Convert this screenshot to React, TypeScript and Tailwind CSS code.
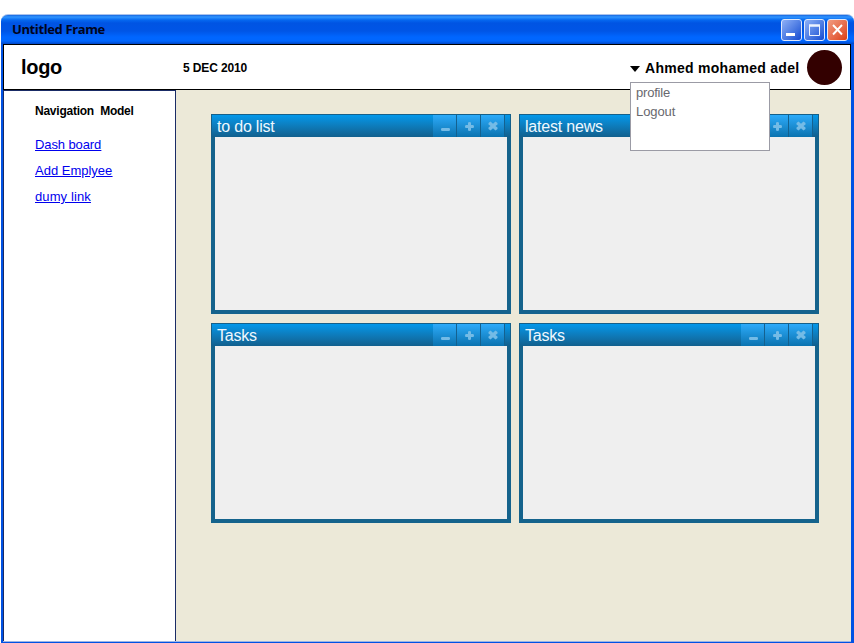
import React from "react";

const glyphs = {
  minimize: <rect x="8" y="13" width="9" height="3" rx="1.2" />,
  add: <path d="M11 8q0-1 1.5-1t1.5 1V10h2q1 0 1 1.5T16 13h-2v2q0 1-1.5 1T11 15v-2H9q-1 0-1-1.5T9 10h2z" />,
  close: (
    <path d="M7.5 8l2-1.5L12 8.7l2.5-2.2 2 1.5v1.5L14.5 11l2 1.5V14l-2 1.5-2.5-2.2-2.5 2.2-2-1.5v-1.5l2-1.5-2-1.5z" />
  ),
};

function PanelButton({ kind }: { kind: keyof typeof glyphs }) {
  return (
    <div className="h-[22px] w-6 border-r border-[#14618f] bg-gradient-to-b from-[#2cabfa] to-[#0a73b0]">
      <svg width="23" height="22" viewBox="0 0 23 22" className="block fill-[#74bbe6]">
        {glyphs[kind]}
      </svg>
    </div>
  );
}

function Panel({ title }: { title: string }) {
  return (
    <section className="flex h-[200px] w-[300px] flex-col bg-[#15638c]">
      <header className="flex h-[23px] shrink-0 border border-b-0 border-[#15608a] bg-gradient-to-b from-[#0298ea] to-[#11608e]">
        <h2 className="flex-1 pl-[5px] pt-px text-base leading-[22px] tracking-[-0.2px] text-[#eef8ff]">{title}</h2>
        <div className="mr-[5px] flex">
          <PanelButton kind="minimize" />
          <PanelButton kind="add" />
          <PanelButton kind="close" />
        </div>
      </header>
      <div className="mx-1 mb-1 flex-1 bg-[#efefef]" />
    </section>
  );
}

function CaptionButton({ kind }: { kind: "min" | "max" | "close" }) {
  const color = kind === "close" ? "from-[#f09a80] to-[#dc3c08]" : "from-[#8fb0f6] to-[#1549d0]";
  return (
    <button className={`h-[22px] w-[21px] rounded-[3px] border border-[#dfe8fb] bg-gradient-to-br ${color}`}>
      <svg width="19" height="20" viewBox="0 0 19 20" className="block" fill="none" stroke="white">
        {kind === "min" && <path d="M4 14.5h9" strokeWidth="3" />}
        {kind === "max" && (
          <g stroke="#edf2fe">
            <path d="M4.5 5v10.5h10V5" />
            <path d="M4 5.5h11" strokeWidth="2.5" />
          </g>
        )}
        {kind === "close" && <path d="M5 5l9 9.5M14 5l-9 9.5" strokeWidth="1.9" />}
      </svg>
    </button>
  );
}

export default function App() {
  return (
    <div className="flex h-[643px] w-[854px] flex-col overflow-hidden bg-white pl-px pt-[14px] font-['Liberation_Sans',Arial,sans-serif]">
      <div className="flex h-[30px] shrink-0 items-start rounded-t-[7px] border-t border-[#a9c2ec] bg-[linear-gradient(to_bottom,#1867df_0px,#3095ff_2px,#0568f0_5px,#0054e3_8px,#0055e6_16px,#0066ff_22px,#0066fe_26px,#0047c8_29px)] pl-[11px] pr-[6px] pt-1">
        <h1 className="flex-1 pt-px font-['Open_Sans',sans-serif] text-[13px] font-bold leading-[18px] tracking-[-0.38px] text-[#00051c]">
          Untitled Frame
        </h1>
        <div className="flex gap-[2px]">
          <CaptionButton kind="min" />
          <CaptionButton kind="max" />
          <CaptionButton kind="close" />
        </div>
      </div>

      <div className="flex min-h-0 flex-1 flex-col border-b border-l-2 border-r-[3px] border-[#0052e4]">
        <header className="flex h-[46px] shrink-0 items-center border border-black bg-white">
          <div className="w-[162px] pl-[17px] text-xl font-bold leading-6 tracking-[-0.3px]">logo</div>
          <div className="flex-1 pl-[17px] pt-[2px] text-xs font-bold tracking-[-0.13px]">5 DEC 2010</div>
          <div className="relative flex items-center gap-[5px] pr-2 pt-px">
            <svg width="10" height="6" viewBox="0 0 10 6" className="mt-[3px] block">
              <path d="M0 0h10L5 6z" />
            </svg>
            <span className="w-[154px] whitespace-nowrap text-sm font-bold leading-5 tracking-[0.28px]">Ahmed mohamed adel</span>
            <div className="absolute left-0 top-[25px] z-10 h-[69px] w-[140px] border border-[#9b9ba5] bg-white pl-[5px] text-[13px] leading-[19px] text-[#68686e]">
              <div className="tracking-[-0.2px]">profile</div>
              <div className="tracking-[-0.1px]">Logout</div>
            </div>
          </div>
          <div className="mr-2 size-[35px] rounded-full bg-[#330000]" />
        </header>

        <div className="flex min-h-0 flex-1 border-b border-[#9db5e4] bg-[#ece9d8]">
          <nav className="flex w-[173px] shrink-0 flex-col items-start border border-b-0 border-[#1a2c66] bg-white pl-[31px] pt-[13px]">
            <h2 className="whitespace-pre text-xs font-bold leading-[14px] tracking-[-0.24px]">Navigation  Model</h2>
            <div className="mt-[14px] flex flex-col text-[13px] leading-[26px] text-[#0000ee] underline">
              <a className="tracking-[-0.1px]">Dash board</a>
              <a>Add Emplyee</a>
              <a className="tracking-[0.1px]">dumy link</a>
            </div>
          </nav>
          <main className="grid h-max grid-cols-[300px_300px] gap-x-2 gap-y-[9px] pl-[35px] pt-6">
            <Panel title="to do list" />
            <Panel title="latest news" />
            <Panel title="Tasks" />
            <Panel title="Tasks" />
          </main>
        </div>
      </div>
    </div>
  );
}
